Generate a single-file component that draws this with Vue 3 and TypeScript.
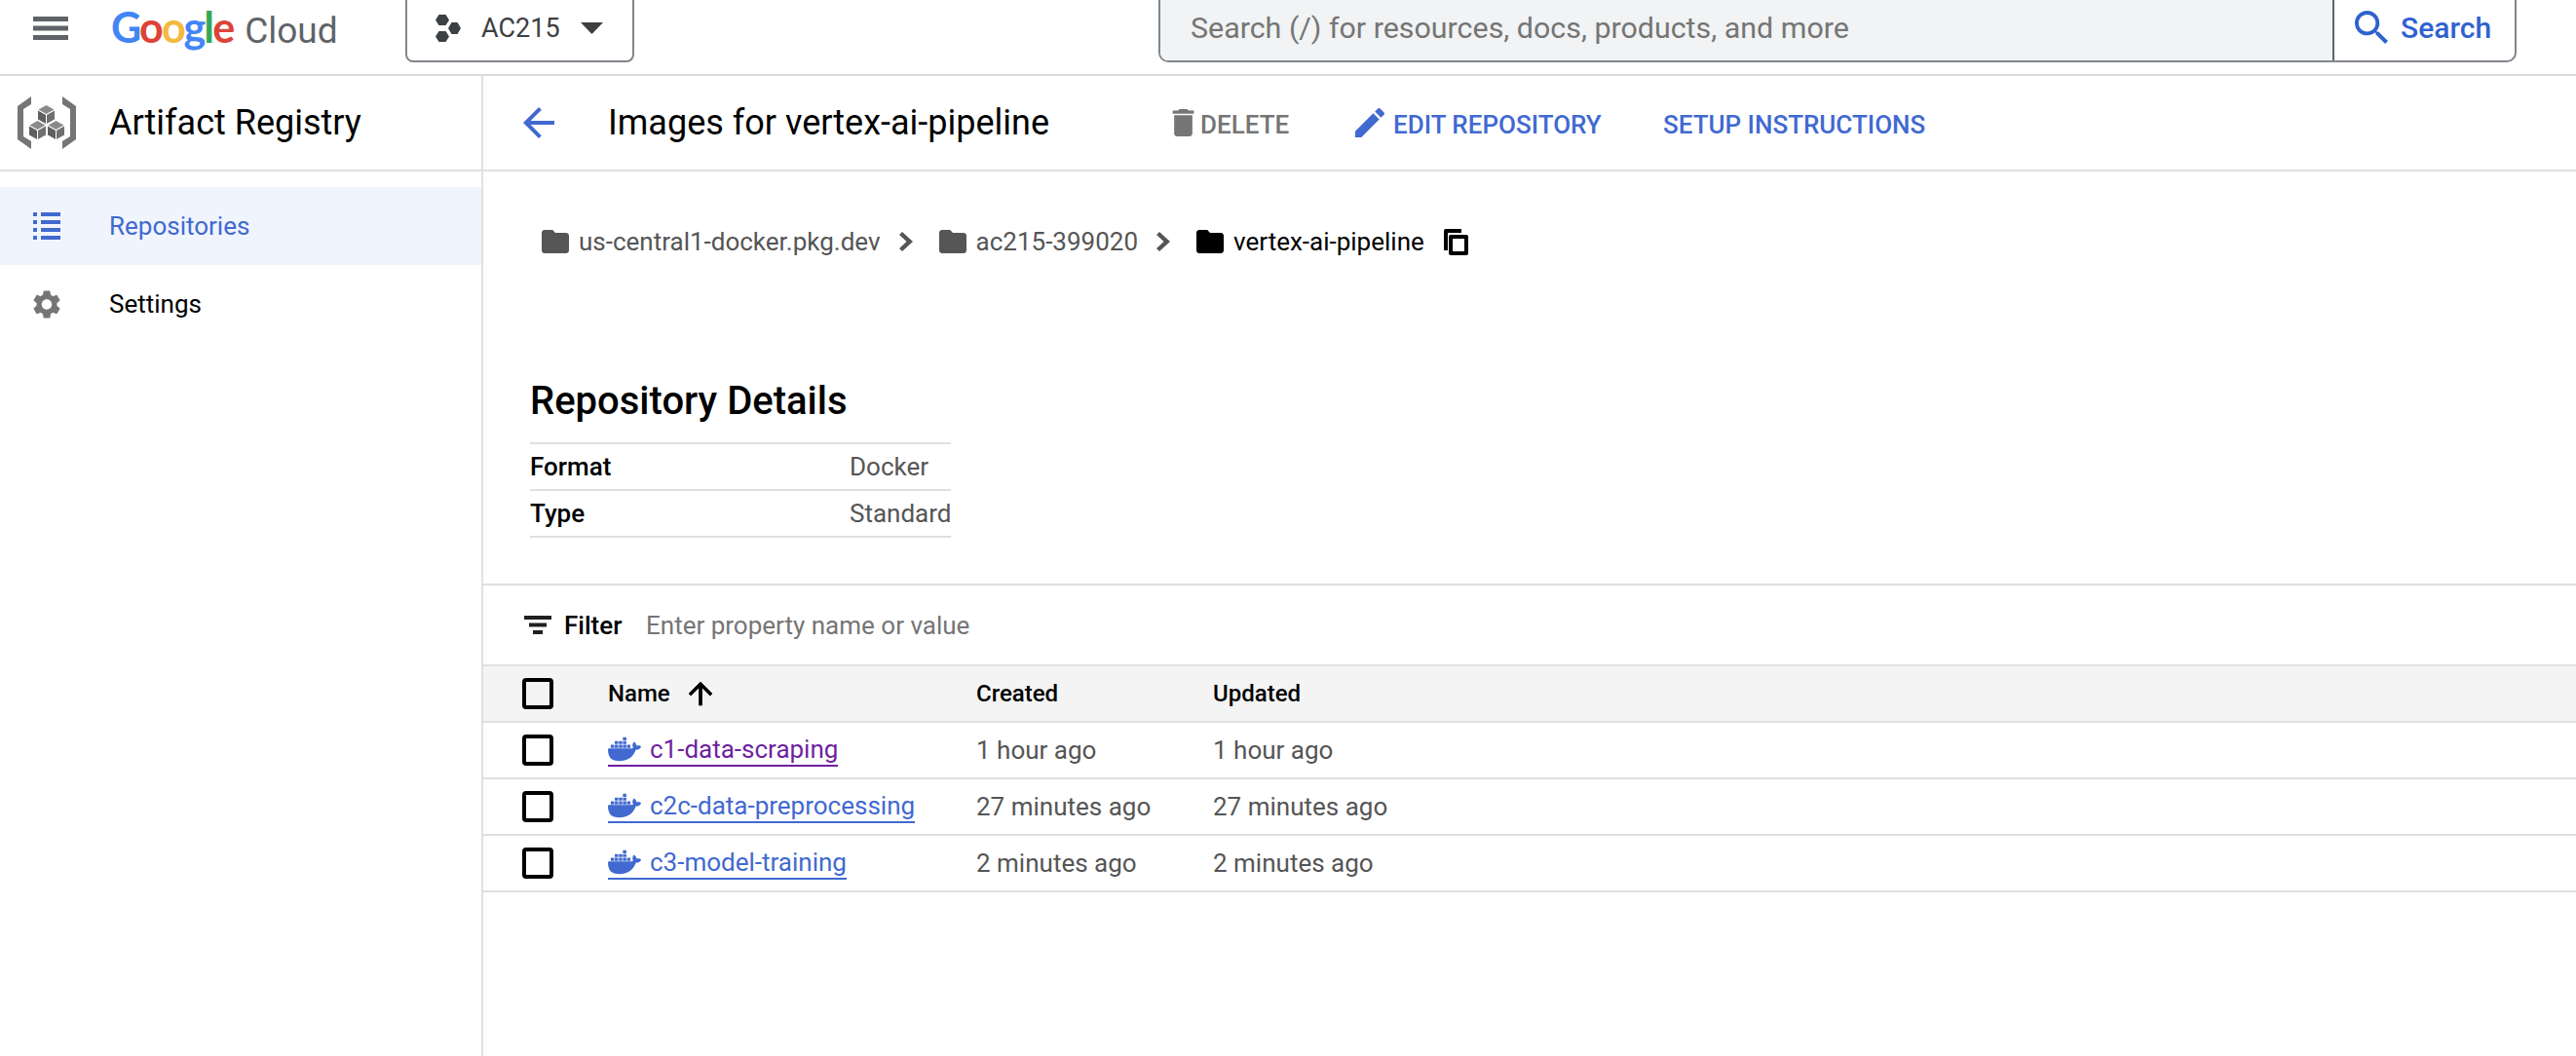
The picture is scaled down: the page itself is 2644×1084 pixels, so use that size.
<script setup lang="ts">
interface Row { name: string; created: string; updated: string; visited?: boolean }
const rows: Row[] = [
  { name: 'c1-data-scraping', created: '1 hour ago', updated: '1 hour ago', visited: true },
  { name: 'c2c-data-preprocessing', created: '27 minutes ago', updated: '27 minutes ago' },
  { name: 'c3-model-training', created: '2 minutes ago', updated: '2 minutes ago' },
]
const folder = 'M10 4H4c-1.1 0-2 .9-2 2v12c0 1.1.9 2 2 2h16c1.1 0 2-.9 2-2V8c0-1.1-.9-2-2-2h-8l-2-2z'
const chevron = 'M3 0L14 10 3 20 0 17 7.500 10 0 3z'
const docker = 'M13.983 11.078h2.119a.186.186 0 00.186-.185V9.006a.186.186 0 00-.186-.186h-2.119a.185.185 0 00-.185.185v1.888c0 .102.083.185.185.185m-2.954-5.43h2.118a.186.186 0 00.186-.186V3.574a.186.186 0 00-.186-.185h-2.118a.185.185 0 00-.185.185v1.888c0 .102.082.185.185.186m0 2.716h2.118a.187.187 0 00.186-.186V6.29a.186.186 0 00-.186-.185h-2.118a.185.185 0 00-.185.185v1.887c0 .102.082.185.185.186m-2.93 0h2.12a.186.186 0 00.184-.186V6.29a.185.185 0 00-.185-.185H8.1a.185.185 0 00-.185.185v1.887c0 .102.083.185.185.186m-2.964 0h2.119a.186.186 0 00.185-.186V6.29a.185.185 0 00-.185-.185H5.136a.186.186 0 00-.186.185v1.887c0 .102.084.185.186.186m5.893 2.715h2.118a.186.186 0 00.186-.185V9.006a.186.186 0 00-.186-.186h-2.118a.185.185 0 00-.185.185v1.888c0 .102.082.185.185.185m-2.93 0h2.12a.185.185 0 00.184-.185V9.006a.185.185 0 00-.184-.186h-2.12a.185.185 0 00-.184.185v1.888c0 .102.083.185.185.185m-2.964 0h2.119a.185.185 0 00.185-.185V9.006a.185.185 0 00-.184-.186h-2.12a.186.186 0 00-.186.186v1.887c0 .102.084.185.186.185m-2.92 0h2.12a.185.185 0 00.184-.185V9.006a.185.185 0 00-.184-.186h-2.12a.185.185 0 00-.184.185v1.888c0 .102.082.185.185.185M23.763 9.89c-.065-.051-.672-.51-1.954-.51-.338.001-.676.03-1.01.087-.248-1.7-1.653-2.53-1.716-2.566l-.344-.199-.226.327c-.284.438-.49.922-.612 1.43-.23.97-.09 1.882.403 2.661-.595.332-1.55.413-1.744.42H.751a.751.751 0 00-.75.748 11.376 11.376 0 00.692 4.062c.545 1.428 1.355 2.48 2.41 3.124 1.18.723 3.1 1.137 5.275 1.137.983.003 1.963-.086 2.93-.266a12.248 12.248 0 003.823-1.389c.98-.567 1.86-1.288 2.61-2.136 1.252-1.418 1.998-2.997 2.553-4.4h.221c1.372 0 2.215-.549 2.68-1.009.309-.293.55-.65.707-1.046l.098-.288Z'
</script>

<template>
  <div class="page">
    <header class="topbar">
      <svg class="menu" viewBox="0 0 24 24"><path d="M3 6h18v2.500H3zM3 10.750h18v2.500H3zM3 15.500h18V18H3z" /></svg>
      <div class="logo"><span class="g-b">G</span><span class="g-r">o</span><span class="g-y">o</span><span class="g-b">g</span><span class="g-g">l</span><span class="g-r">e</span><span class="cloud">Cloud</span></div>
      <div class="project">
        <svg class="hex" viewBox="0 0 26 28"><path d="M3.500 0h7L14 5.500 10.500 11h-7L0 5.500zM16.500 8h6L26 14l-3.500 6h-6L13 14zM3.500 17h7l3.500 5.500-3.500 5.500h-7L0 22.500z" /></svg>
        <span>AC215</span>
        <svg class="caret" viewBox="0 0 23 12"><path d="M0 0h23L11.500 12z" /></svg>
      </div>
      <div class="search">
        <div class="search-input">Search (/) for resources, docs, products, and more</div>
        <div class="search-btn">
          <svg viewBox="3 3 18 18"><path d="M15.500 14h-.79l-.28-.27C15.410 12.590 16 11.110 16 9.500 16 5.910 13.090 3 9.500 3S3 5.910 3 9.500 5.910 16 9.500 16c1.610 0 3.090-.59 4.230-1.570l.27.28v.79l5 4.990L20.490 19l-4.990-5zm-6 0C7.010 14 5 11.990 5 9.500S7.010 5 9.500 5 14 7.010 14 9.500 11.990 14 9.500 14z" /></svg>
          <span>Search</span>
        </div>
      </div>
    </header>

    <div class="body">
      <aside class="sidebar">
        <div class="side-head">
          <svg class="ar-logo" viewBox="0 0 60 54">
            <path d="M14 0v8L6 13v28l8 5v8L0 44V10z" fill="#757575" />
            <path d="M46 0v8l8 5v28l-8 5v8l14-10V10z" fill="#757575" />
            <path d="M29.500 9l8 4.500-8 4.500-8-4.500z" fill="#8a8a8a" />
            <path d="M21 14.500l8 4.500v9l-8-4.500z" fill="#5f5f5f" />
            <path d="M38 14.500l-8 4.500v9l8-4.500z" fill="#6f6f6f" />
            <path d="M20.500 25l8 4.500-8 4.500-8-4.500z" fill="#8a8a8a" />
            <path d="M12 30.500l8 4.500v9l-8-4.500z" fill="#5f5f5f" />
            <path d="M29 30.500l-8 4.500v9l8-4.500z" fill="#6f6f6f" />
            <path d="M39.500 25l8 4.500-8 4.500-8-4.500z" fill="#8a8a8a" />
            <path d="M31 30.500l8 4.500v9l-8-4.500z" fill="#5f5f5f" />
            <path d="M48 30.500l-8 4.500v9l8-4.500z" fill="#6f6f6f" />
          </svg>
          <span>Artifact Registry</span>
        </div>
        <nav class="nav">
          <div class="nav-item active">
            <svg class="nav-icon" viewBox="0 0 28 28"><path d="M0 0h4v4H0zM8 0h20v4H8zM0 8h4v4H0zM8 8h20v4H8zM0 16h4v4H0zM8 16h20v4H8zM0 24h4v4H0zM8 24h20v4H8z" /></svg>
            <span>Repositories</span>
          </div>
          <div class="nav-item">
            <svg class="nav-icon gear" viewBox="2.400 2 19.200 20"><path d="M19.140 12.940c.04-.3.06-.61.06-.94 0-.32-.02-.64-.07-.94l2.030-1.580c.18-.14.23-.41.12-.61l-1.920-3.320c-.12-.22-.37-.29-.59-.22l-2.390.96c-.5-.38-1.030-.7-1.620-.94l-.36-2.540c-.04-.24-.24-.41-.48-.41h-3.840c-.24 0-.43.17-.47.41l-.36 2.540c-.59.24-1.130.57-1.620.94l-2.390-.96c-.22-.08-.47 0-.59.22L2.740 8.870c-.12.21-.08.47.12.61l2.030 1.580c-.05.3-.09.63-.09.94s.02.64.07.94l-2.030 1.580c-.18.14-.23.41-.12.61l1.920 3.320c.12.22.37.29.59.22l2.390-.96c.5.38 1.030.7 1.620.94l.36 2.540c.05.24.24.41.48.41h3.840c.24 0 .44-.17.47-.41l.36-2.540c.59-.24 1.130-.56 1.620-.94l2.390.96c.22.08.47 0 .59-.22l1.920-3.320c.12-.22.07-.47-.12-.61l-2.010-1.580zM12 15.600c-1.980 0-3.600-1.620-3.600-3.600s1.620-3.600 3.600-3.600 3.600 1.620 3.600 3.600-1.620 3.600-3.600 3.600z" /></svg>
            <span>Settings</span>
          </div>
        </nav>
      </aside>

      <main class="main">
        <div class="main-head">
          <svg class="back" viewBox="4 4 16 16"><path d="M20 11H7.830l5.590-5.590L12 4l-8 8 8 8 1.410-1.410L7.830 13H20v-2z" /></svg>
          <h1>Images for vertex-ai-pipeline</h1>
          <div class="action delete">
            <svg viewBox="5 3 14 18"><path d="M6 19c0 1.100.9 2 2 2h8c1.100 0 2-.9 2-2V7H6v12zM19 4h-3.500l-1-1h-5l-1 1H5v2h14V4z" /></svg>
            <span>DELETE</span>
          </div>
          <div class="action edit">
            <svg viewBox="3 3 18 18"><path d="M3 17.250V21h3.750L17.810 9.940l-3.750-3.750L3 17.250zM20.710 7.040c.39-.39.39-1.020 0-1.410l-2.340-2.340c-.39-.39-1.020-.39-1.410 0l-1.830 1.830 3.750 3.750 1.830-1.830z" /></svg>
            <span>EDIT REPOSITORY</span>
          </div>
          <div class="action setup"><span>SETUP INSTRUCTIONS</span></div>
        </div>

        <div class="crumbs">
          <svg class="folder" viewBox="2 4 20 16" preserveAspectRatio="none"><path :d="folder" /></svg>
          <span>us-central1-docker.pkg.dev</span>
          <svg class="chev" viewBox="0 0 14 20"><path :d="chevron" /></svg>
          <svg class="folder" viewBox="2 4 20 16" preserveAspectRatio="none"><path :d="folder" /></svg>
          <span>ac215-399020</span>
          <svg class="chev" viewBox="0 0 14 20"><path :d="chevron" /></svg>
          <svg class="folder cur" viewBox="2 4 20 16" preserveAspectRatio="none"><path :d="folder" /></svg>
          <span class="cur-text">vertex-ai-pipeline</span>
          <svg class="copy" viewBox="0 0 25 27"><path fill-rule="evenodd" d="M0 2a2 2 0 012-2h16v4H4v18H0zM7 6h16a2 2 0 012 2v17a2 2 0 01-2 2H7a2 2 0 01-2-2V8a2 2 0 012-2zM9 10v13h12V10z" /></svg>
        </div>

        <section class="details">
          <h2>Repository Details</h2>
          <div class="kv"><b>Format</b><span>Docker</span></div>
          <div class="kv"><b>Type</b><span>Standard</span></div>
        </section>

        <div class="filter">
          <svg viewBox="0 0 28 19"><path d="M0 0h28v4H0zM5 7.500h18v4H5zM9 15h10v4H9z" /></svg>
          <b>Filter</b>
          <span>Enter property name or value</span>
        </div>

        <div class="table">
          <div class="tr th">
            <i class="check"></i>
            <div class="name-h">Name
              <svg viewBox="4 4 16 16"><path stroke="currentColor" stroke-width=".5" d="M4 12l1.410 1.410L11 7.830V20h2V7.830l5.580 5.590L20 12l-8-8-8 8z" /></svg>
            </div>
            <div>Created</div>
            <div>Updated</div>
          </div>
          <div v-for="r in rows" :key="r.name" class="tr td">
            <i class="check"></i>
            <div><a class="link" :class="{ visited: r.visited }">
              <svg class="whale" viewBox="0 0 24 24"><path :d="docker" /></svg>{{ r.name }}</a></div>
            <div>{{ r.created }}</div>
            <div>{{ r.updated }}</div>
          </div>
        </div>
      </main>
    </div>
  </div>
</template>

<style scoped>
.page {
  width: 2644px;
  height: 1084px;
  overflow: hidden;
  display: flex;
  flex-direction: column;
  background: #fff;
  color: #000;
  font-family: Roboto, "Liberation Sans", sans-serif;
  font-size: 26px;
}
svg { display: block; flex: none; fill: currentColor; }
.topbar {
  height: 76px;
  flex: none;
  box-sizing: content-box;
  border-bottom: 2px solid #dadce0;
  display: flex;
  align-items: flex-start;
}
.menu { width: 48px; height: 48px; margin: 5px 0 0 28px; color: #5f6368; }
.logo {
  margin: 0 0 0 38px;
  width: 302px;
  font-family: Lato, Roboto, sans-serif;
  font-size: 43px;
  font-weight: 700;
  line-height: 56px;
  letter-spacing: -1.900px;
  white-space: nowrap;
}
.g-b { color: #4285f4; } .g-r { color: #db4437; } .g-y { color: #f4b93e; } .g-g { color: #34a853; }
.cloud {
  color: #5f6368;
  margin-left: 12px;
  font-family: Roboto, sans-serif;
  font-size: 37px;
  font-weight: 400;
  letter-spacing: 0;
}
.project {
  width: 235px;
  height: 64px;
  box-sizing: border-box;
  border: 2px solid #80868b;
  border-top: 0;
  border-radius: 0 0 8px 8px;
  display: flex;
  align-items: center;
  padding: 0 0 5px 29px;
  font-size: 27px;
  color: #3c4043;
}
.hex { width: 26px; height: 28px; margin-right: 21px; }
.caret { width: 23px; height: 12px; margin-left: 21px; }
.search {
  margin-left: 538px;
  width: 1394px;
  height: 64px;
  box-sizing: border-box;
  border: 2px solid #80868b;
  border-top: 0;
  border-radius: 0 0 10px 10px;
  display: flex;
  overflow: hidden;
}
.search-input {
  width: 1205px;
  box-sizing: border-box;
  background: #f1f3f4;
  border-right: 2px solid #5f6368;
  padding: 0 0 5px 31px;
  display: flex;
  align-items: center;
  font-size: 30.400px;
  color: #757575;
}
.search-btn {
  flex: 1;
  display: flex;
  align-items: center;
  padding: 0 0 5px 21px;
  color: #2f62d0;
  font-size: 30px;
  font-weight: 500;
}
.search-btn svg { width: 35px; height: 35px; margin-right: 12px; }
.body { flex: 1; display: flex; min-height: 0; }
.sidebar {
  width: 496px;
  flex: none;
  box-sizing: border-box;
  border-right: 2px solid #e0e0e0;
}
.side-head {
  height: 98px;
  box-sizing: border-box;
  border-bottom: 2px solid #e0e0e0;
  margin-right: -2px;
  display: flex;
  align-items: center;
  padding-left: 18px;
  font-size: 36px;
}
.ar-logo { width: 60px; height: 54px; margin-right: 34px; color: #757575; }
.nav { padding-top: 16px; }
.nav-item {
  height: 80px;
  display: flex;
  align-items: center;
  padding-left: 34px;
  font-size: 26px;
}
.nav-item.active { background: #f0f4fd; color: #4169d0; }
.nav-icon { width: 28px; height: 28px; margin-right: 50px; }
.gear { color: #757575; height: 29px; }
.main { flex: 1; min-width: 0; }
.main-head {
  height: 98px;
  box-sizing: border-box;
  border-bottom: 2px solid #e0e0e0;
  display: flex;
  align-items: center;
  padding-left: 41px;
}
.back { width: 32px; height: 32px; color: #4169d0; margin-right: 55px; }
h1 { margin: 0; font-size: 36px; font-weight: 400; width: 578px; white-space: nowrap; }
.action {
  display: flex;
  align-items: center;
  font-size: 26px;
  font-weight: 500;
  color: #4169d0;
  white-space: nowrap;
  padding-top: 3px;
}
.action svg { width: 23px; height: 28px; margin: -3px 6px 0 1px; }
.delete { color: #757575; width: 189px; }
.edit { width: 316px; }
.edit svg { width: 30px; height: 30px; margin-right: 9px; margin-left: 0; }
.crumbs {
  display: flex;
  align-items: center;
  height: 48px;
  margin-top: 48px;
  padding-left: 60px;
  color: #555;
}
.folder { width: 28px; height: 24px; margin-right: 10px; }
.chev { width: 14px; height: 20px; margin: 0 27px 0 19px; }
.cur { color: #000; }
.cur-text { color: #000; }
.copy { width: 25px; height: 27px; margin-left: 20px; color: #000; }
.details { margin: 0 0 0 48px; width: 432px; padding-top: 116px; height: 327px; box-sizing: border-box; }
.details h2 { margin: 0 0 18px 0; font-size: 40px; font-weight: 500; height: 48px; line-height: 48px; white-space: nowrap; }
.kv {
  display: grid;
  grid-template-columns: 328px 1fr;
  align-items: center;
  height: 48px;
  border-bottom: 2px solid #e0e0e0;
  box-sizing: border-box;
}
.details h2 + .kv { border-top: 2px solid #e0e0e0; height: 50px; }
.kv b { font-weight: 500; }
.kv span { color: #555; }
.filter {
  height: 83px;
  box-sizing: border-box;
  border-top: 2px solid #e0e0e0;
  display: flex;
  align-items: center;
  padding-left: 42px;
}
.filter svg { width: 28px; height: 19px; margin-right: 13px; color: #212121; }
.filter b { font-weight: 500; width: 84px; }
.filter span { color: #757575; }
.table { border-top: 2px solid #e0e0e0; }
.tr {
  display: grid;
  grid-template-columns: 128px 378px 243px 1fr;
  align-items: center;
  height: 58px;
  box-sizing: border-box;
  border-bottom: 2px solid #e0e0e0;
}
.th { background: #f4f4f4; font-weight: 500; font-size: 24px; }
.td { color: #555; }
.check {
  display: block;
  width: 32px;
  height: 32px;
  box-sizing: border-box;
  border: 4px solid #000;
  border-radius: 4px;
  margin-left: 40px;
}
.name-h { display: flex; align-items: center; gap: 19px; }
.name-h svg { width: 24px; height: 26px; }
.link {
  display: inline-flex;
  align-items: center;
  color: #4169d0;
  border-bottom: 2px solid currentColor;
  height: 32px;
  line-height: 32px;
  margin-top: 5px;
}
.link.visited { color: #6f1f9f; }
.whale { width: 34px; height: 34px; margin-right: 9px; color: #4169d0; }
</style>

<style>
html, body { margin: 0; padding: 0; background: #fff; }
</style>
